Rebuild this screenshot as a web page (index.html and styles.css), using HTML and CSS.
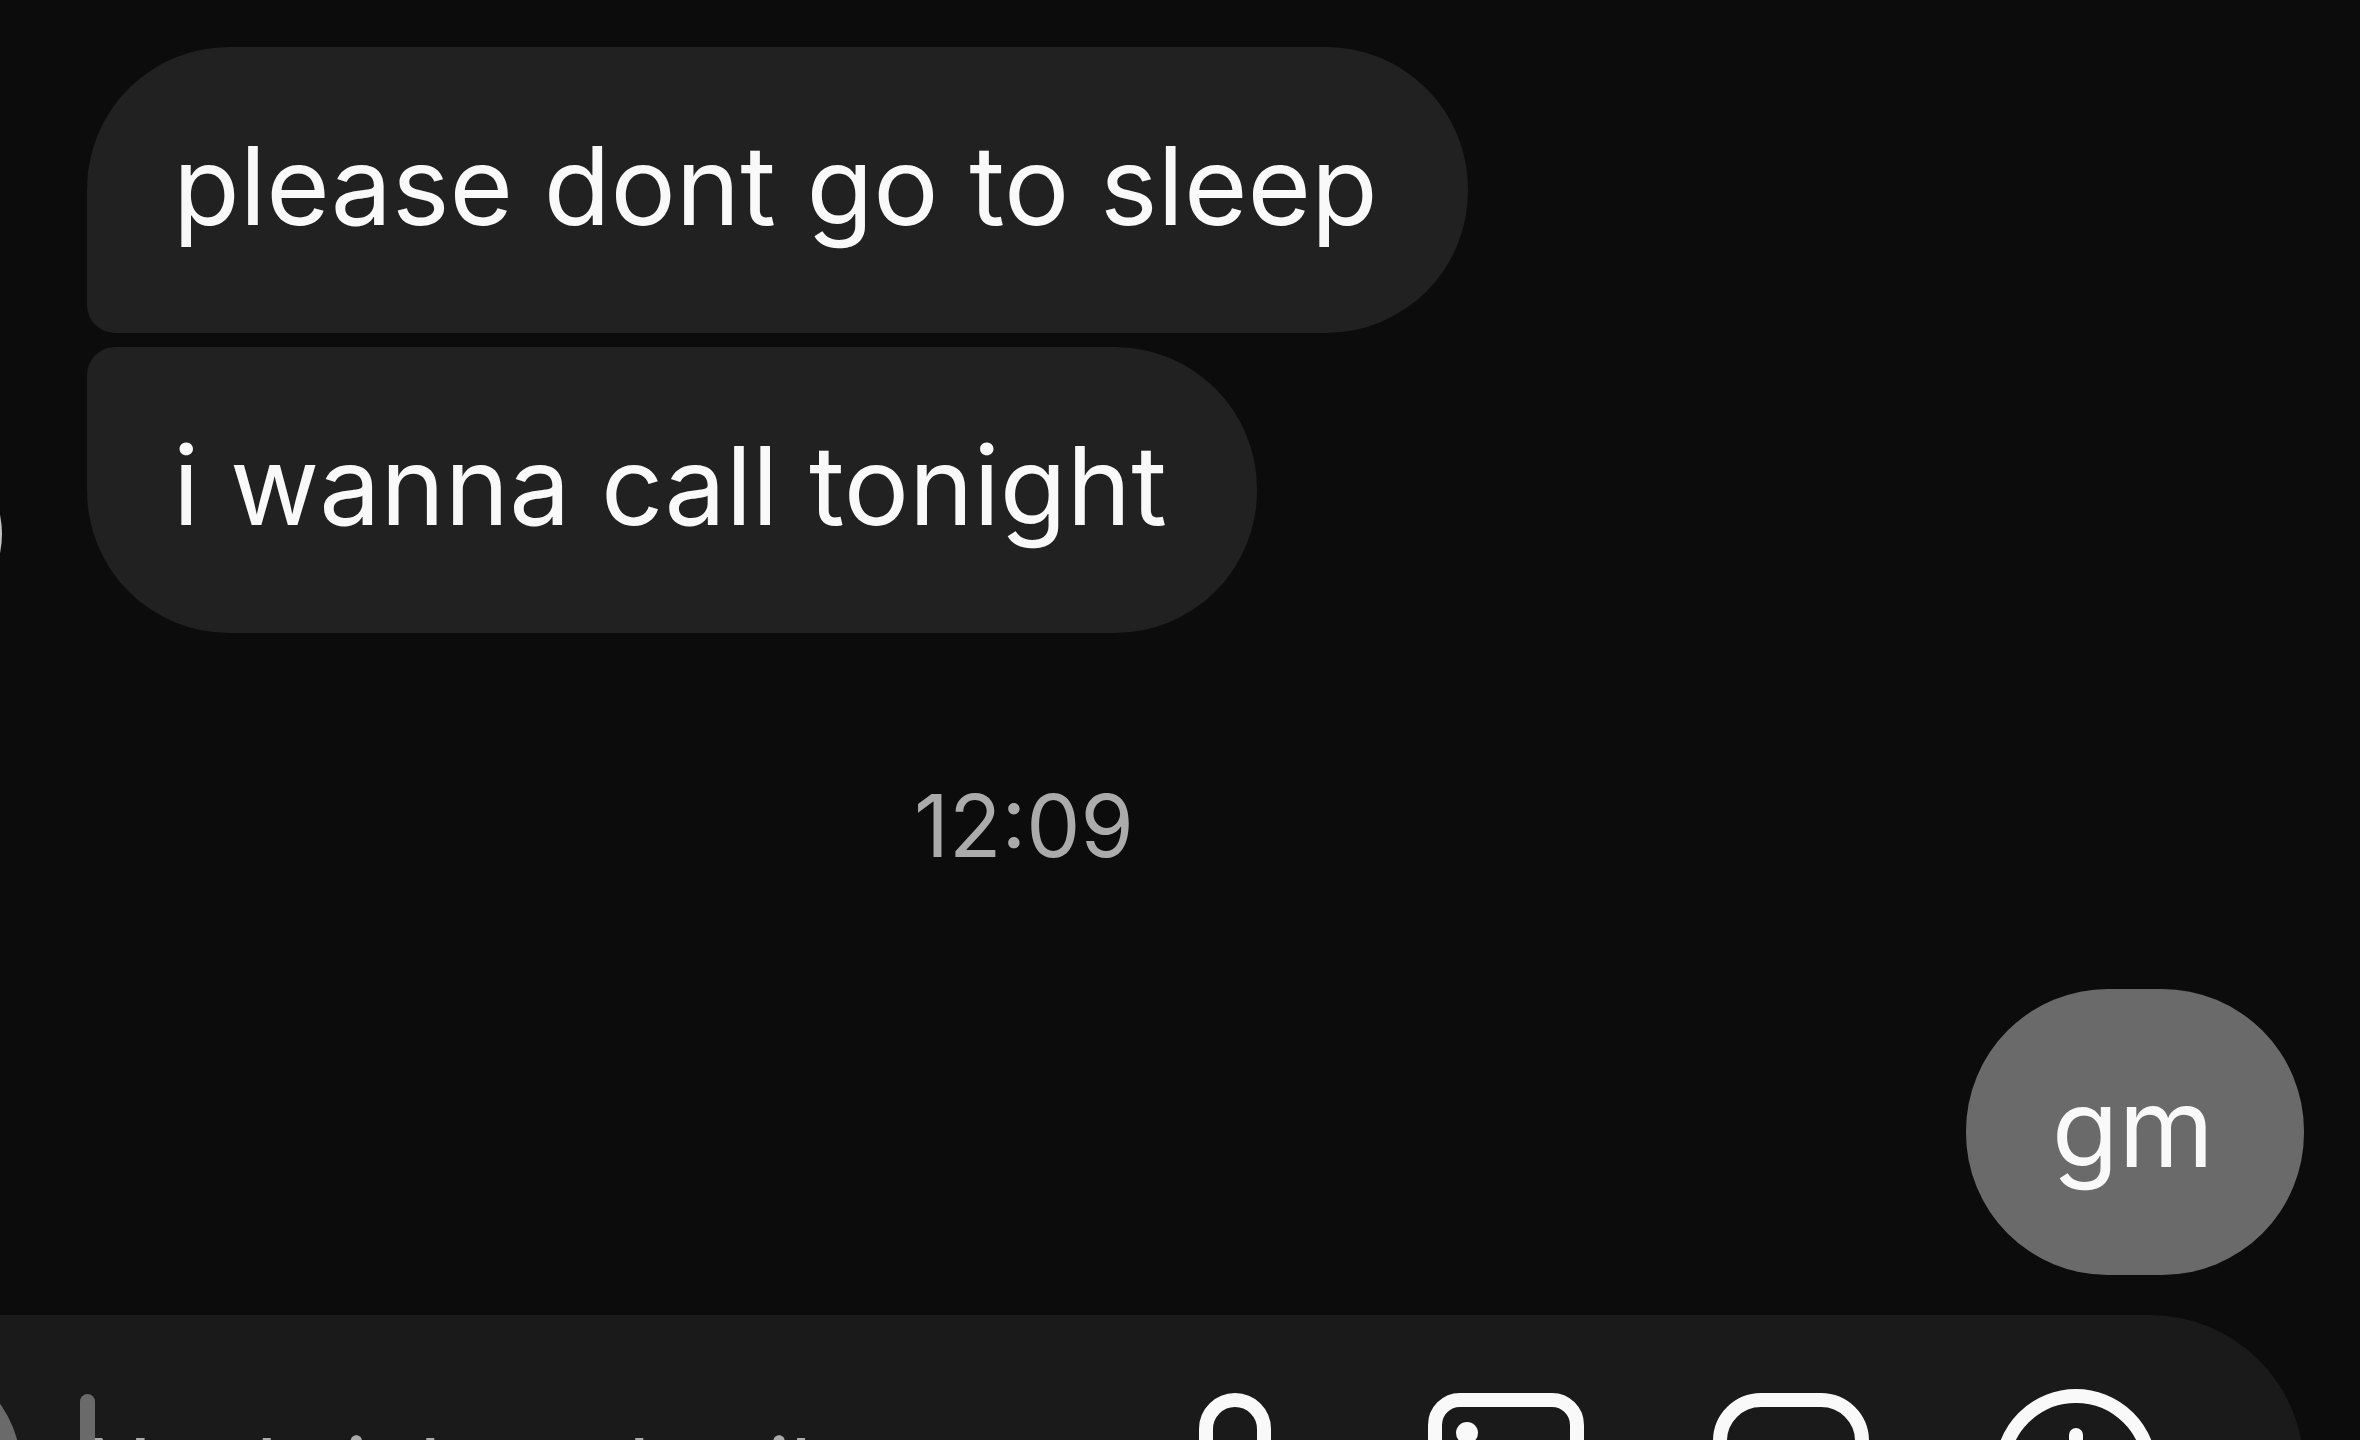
FILE: index.html
```html
<!DOCTYPE html>
<html lang="de">
<head>
    <meta charset="UTF-8">
    <meta name="viewport" content="width=device-width, initial-scale=1.0">
    <title>Chat</title>
    <link rel="stylesheet" href="styles.css">
</head>
<body>

<main class="chat">
    <section class="incoming">
        <div class="avatar"></div>
        <div class="messages">
            <p class="bubble first">please dont go to sleep</p>
            <p class="bubble last">i wanna call tonight</p>
        </div>
    </section>

    <time class="timestamp" datetime="12:09">12:09</time>

    <section class="outgoing">
        <p class="bubble own">gm</p>
    </section>

    <form class="composer">
        <button type="button" class="camera" aria-label="Kamera"></button>
        <div class="field">
            <span class="caret"></span>
            <input type="text" class="message-input" placeholder="Nachricht schreiben" aria-label="Nachricht schreiben">
        </div>
        <div class="actions">
            <button type="button" class="icon-btn mic" aria-label="Sprachnachricht">
                <svg width="134" height="164" viewBox="0 0 134 164">
                    <rect x="37" y="13" width="58" height="92" rx="29"/>
                    <path d="M11 74a55 55 0 0 0 110 0M66 129v28"/>
                </svg>
            </button>
            <button type="button" class="icon-btn" aria-label="Foto">
                <svg width="164" height="164" viewBox="0 0 164 164">
                    <rect x="11" y="13" width="142" height="142" rx="25"/>
                    <circle class="dot" cx="43" cy="46" r="11"/>
                    <path d="M14 130l42-38 28 24 28-34 38 40"/>
                </svg>
            </button>
            <button type="button" class="icon-btn" aria-label="Sticker">
                <svg width="164" height="164" viewBox="0 0 164 164">
                    <path d="M52 13h60a41 41 0 0 1 41 41v46l-55 55H52a41 41 0 0 1-41-41V54a41 41 0 0 1 41-41z"/>
                    <path d="M98 155v-22a33 33 0 0 1 33-33h22"/>
                </svg>
            </button>
            <button type="button" class="icon-btn" aria-label="Mehr">
                <svg width="164" height="164" viewBox="0 0 164 164">
                    <circle cx="82" cy="83" r="74"/>
                    <path d="M82 48v70M47 83h70"/>
                </svg>
            </button>
        </div>
    </form>
</main>

</body>
</html>
```
FILE: styles.css
```css
:root {
    --bg: #0c0c0c;
    --bubble: #212121;
    --own: #6a6a6a;
    --bar: #1a1a1a;
    --text: #f9f9f9;
    --muted: #ababab;
}

* { box-sizing: border-box; }

body {
    background: var(--bg);
    color: var(--text);
    font-family: Inter, "Liberation Sans", sans-serif;
    font-size: 109px;
    line-height: 136px;
    height: 100vh;
    margin: 0;
    overflow: hidden;
}

p { margin: 0; }

/* The conversation runs past the left side of the window */
.chat {
    display: flex;
    flex-direction: column;
    margin-left: -312px;
    padding: 47px 56px 0;
}

.incoming {
    display: flex;
    align-items: flex-end;
    gap: 85px;
    padding-left: 74px;
}

.avatar {
    flex: none;
    width: 184px;
    height: 184px;
    margin-bottom: 7px;
    border-radius: 50%;
    background: #c4c4c4;
}

.messages {
    display: flex;
    flex-direction: column;
    align-items: flex-start;
    gap: 14px;
}

.bubble {
    background: var(--bubble);
    border-radius: 142px;
    padding: 70px 90px 80px 86px;
    white-space: nowrap;
}
.bubble.first { border-bottom-left-radius: 28px; }
.bubble.last { border-top-left-radius: 28px; }
.bubble.own { background: var(--own); }

.timestamp {
    align-self: center;
    color: var(--muted);
    font-size: 86px;
    line-height: 100px;
    margin: 143px 0 113px;
}

.outgoing { display: flex; justify-content: flex-end; }

.composer {
    flex: none;
    display: flex;
    align-items: center;
    background: var(--bar);
    border-radius: 154px;
    height: 308px;
    margin-top: 40px;
    padding: 0 146px 0 53px;
}

.camera {
    flex: none;
    width: 224px;
    height: 224px;
    padding: 0;
    border: none;
    border-radius: 50%;
    background: var(--own);
}

.field {
    position: relative;
    flex: 1;
    min-width: 0;
    margin-left: 59px;
}

.caret {
    position: absolute;
    top: 0;
    left: 0;
    width: 15px;
    height: 150px;
    border-radius: 8px;
    background: var(--own);
}

.message-input {
    display: block;
    width: 100%;
    height: 150px;
    padding: 4px 0 0 4px;
    border: none;
    outline: none;
    background: none;
    color: var(--text);
    font: inherit;
    font-size: 91px;
}
.message-input::placeholder { color: var(--muted); opacity: 1; }

.actions { flex: none; display: flex; gap: 121px; }

.icon-btn {
    padding: 0;
    border: none;
    background: none;
    color: var(--text);
}
.icon-btn svg {
    display: block;
    fill: none;
    stroke: currentColor;
    stroke-width: 14;
    stroke-linecap: round;
    stroke-linejoin: round;
}
.icon-btn .dot { fill: currentColor; stroke: none; }
```
